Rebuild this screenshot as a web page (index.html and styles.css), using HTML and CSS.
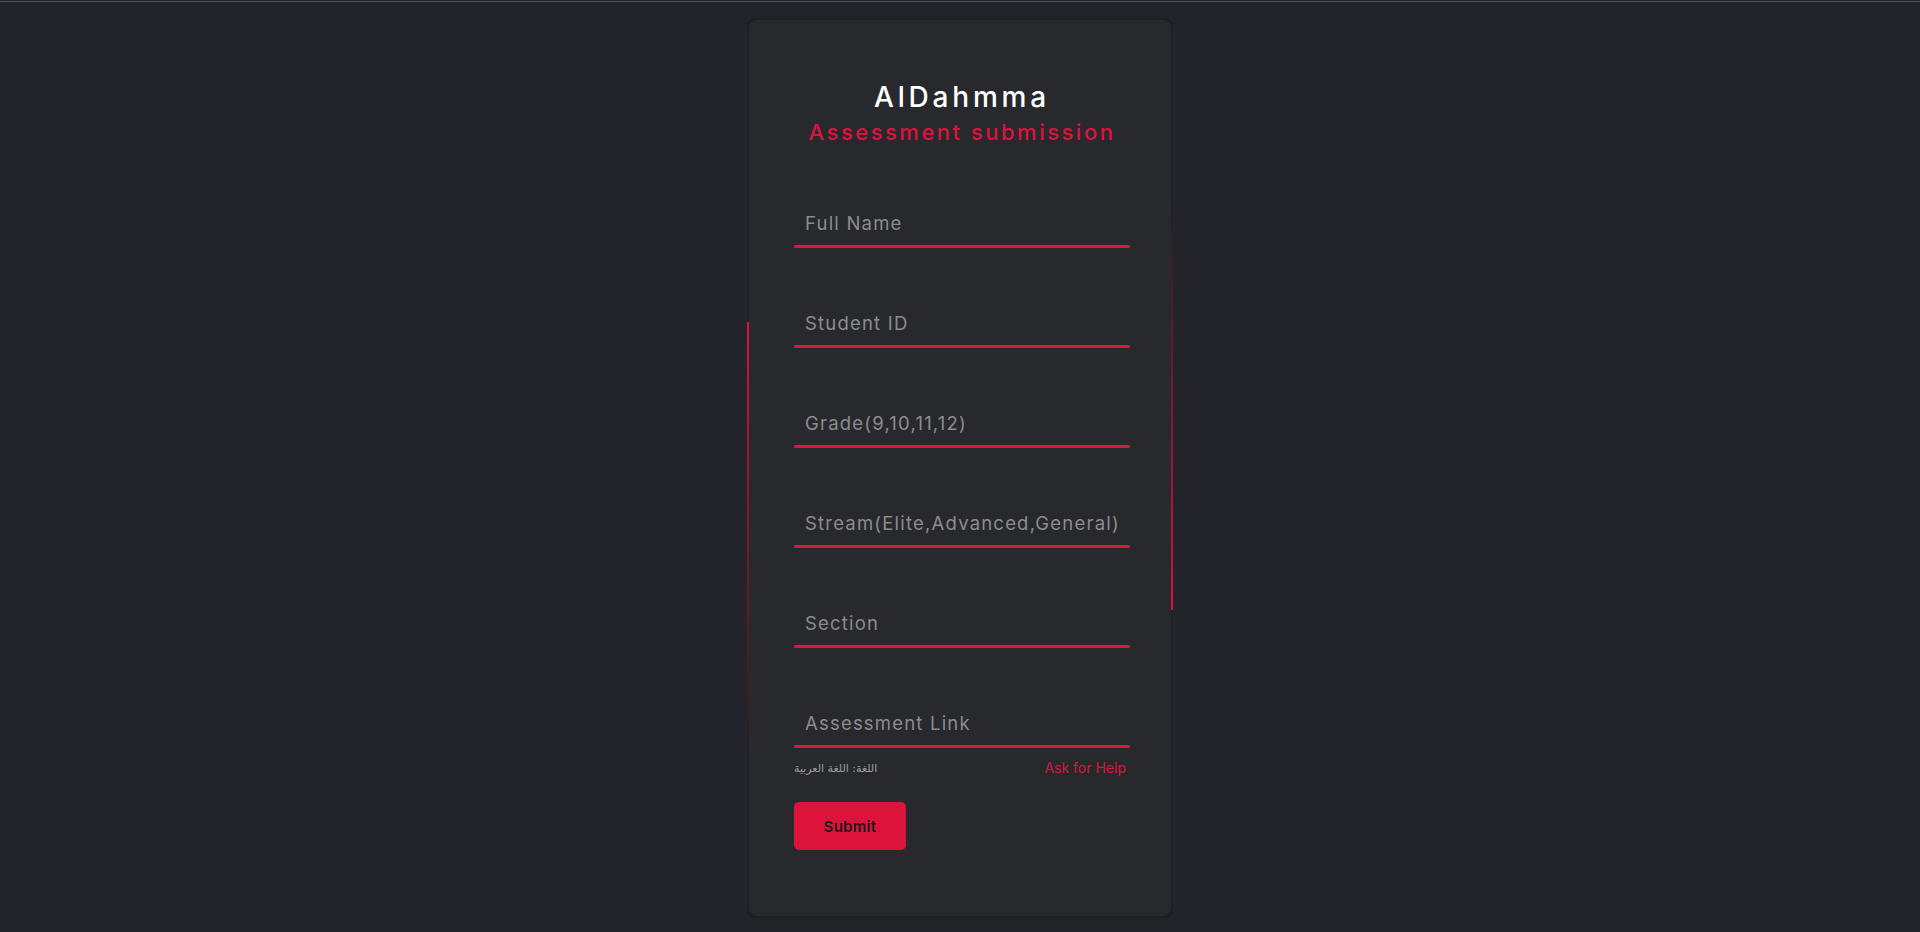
FILE: index.html
```html
<!DOCTYPE html>
<html lang="en">
<head>
<meta charset="utf-8">
<title>AlDahmma - Assessment submission</title>
<link rel="stylesheet" href="styles.css">
</head>
<body>
<div class="topline"></div>
<main class="page">
  <div class="box">
    <form class="form">
      <h2 class="title">AlDahmma</h2>
      <h3 class="subtitle">Assessment submission</h3>
      <div class="field first"><span class="label">Full Name</span><i class="line"></i></div>
      <div class="field"><span class="label">Student ID</span><i class="line"></i></div>
      <div class="field"><span class="label">Grade(9,10,11,12)</span><i class="line"></i></div>
      <div class="field"><span class="label">Stream(Elite,Advanced,General)</span><i class="line"></i></div>
      <div class="field"><span class="label">Section</span><i class="line"></i></div>
      <div class="field"><span class="label">Assessment Link</span><i class="line"></i></div>
      <div class="links">
        <span class="lang" dir="rtl">اللغة: اللغة العربية</span>
        <a class="help" href="#">Ask for Help</a>
      </div>
      <button class="submit" type="button">Submit</button>
    </form>
  </div>
</main>
</body>
</html>
```

FILE: styles.css
```css
html, body {
  margin: 0;
  padding: 0;
  background: #23242a;
  height: 100%;
}
body {
  font-family: "Inter", "Open Sans", sans-serif;
  overflow: hidden;
}
.topline {
  height: 1px;
  margin-top: 1px;
  background: #505157;
}
.page {
  display: flex;
  justify-content: center;
  padding-top: 16px;
}
.box {
  position: relative;
  width: 426px;
  height: 900px;
  box-sizing: border-box;
  padding: 2px;
  background: #1e1f23;
  border-radius: 9px;
  overflow: hidden;
}
.box::before,
.box::after {
  content: "";
  position: absolute;
  width: 2px;
}
.box::before {
  left: 0;
  top: 304px;
  height: 440px;
  background: linear-gradient(to bottom, #dc143c 0%, rgba(220,20,60,0.55) 40%, rgba(220,20,60,0) 100%);
}
.box::after {
  right: 0;
  top: 180px;
  height: 412px;
  background: linear-gradient(to top, #dc143c 0%, rgba(220,20,60,0.55) 45%, rgba(220,20,60,0) 100%);
}
.form {
  position: relative;
  z-index: 1;
  height: 100%;
  box-sizing: border-box;
  background: #28292d;
  border-radius: 8px;
  padding: 60px 41px 0 45px;
  display: flex;
  flex-direction: column;
  align-items: stretch;
}
.title {
  margin: 0;
  text-align: center;
  color: #ffffff;
  font-size: 28px;
  line-height: 34px;
  font-weight: 500;
  letter-spacing: 3.8px;
}
.subtitle {
  margin: 5px 0 0;
  text-align: center;
  color: #dc143c;
  font-size: 22px;
  line-height: 26px;
  font-weight: 500;
  letter-spacing: 2.5px;
}
.field {
  display: flex;
  flex-direction: column;
  margin-top: 63px;
}
.field.first {
  margin-top: 66px;
}
.label {
  padding-left: 11px;
  font-size: 18.5px;
  line-height: 24px;
  color: #8c8c8f;
  letter-spacing: 1.2px;
  white-space: nowrap;
}
.line {
  display: block;
  height: 3px;
  margin-top: 10px;
  background: #d41a3f;
  border-radius: 2px;
}
.links {
  display: flex;
  justify-content: space-between;
  align-items: center;
  margin-top: 11px;
  height: 18px;
}
.lang {
  font-family: "DejaVu Sans", sans-serif;
  font-size: 11px;
  color: #9c9c9e;
}
.help {
  margin-right: 4px;
  font-size: 14px;
  line-height: 18px;
  color: #dc143c;
  text-decoration: none;
}
.submit {
  align-self: flex-start;
  margin-top: 25px;
  width: 112px;
  height: 48px;
  border: none;
  border-radius: 5px;
  background: #dc143c;
  color: #1a1a1d;
  font-family: "Inter", "Open Sans", sans-serif;
  font-size: 15px;
  font-weight: 600;
  letter-spacing: 0.3px;
  cursor: pointer;
}
```
